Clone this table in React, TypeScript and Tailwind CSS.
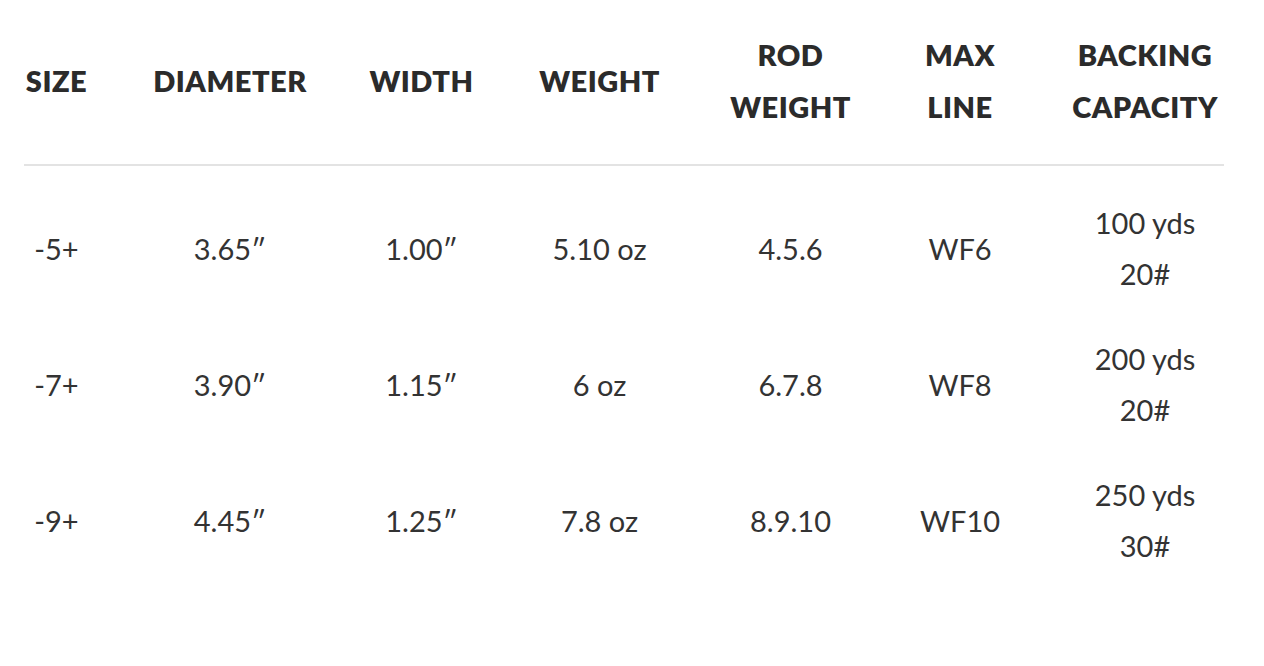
const heads = [["SIZE"], ["DIAMETER"], ["WIDTH"], ["WEIGHT"], ["ROD", "WEIGHT"], ["MAX", "LINE"], ["BACKING", "CAPACITY"]];

const rows = [
  ["-5+", "3.65″", "1.00″", "5.10 oz", "4.5.6", "WF6", ["100 yds", "20#"]],
  ["-7+", "3.90″", "1.15″", "6 oz", "6.7.8", "WF8", ["200 yds", "20#"]],
  ["-9+", "4.45″", "1.25″", "7.8 oz", "8.9.10", "WF10", ["250 yds", "30#"]],
];

const cols = "grid grid-cols-[65px_282px_101px_255px_127px_212px_158px]";

export default function App() {
  return (
    <div className="min-h-screen bg-white px-6 font-['Lato',sans-serif] text-[#333]">
      <div className="w-[1200px]">
        <div className={`${cols} h-[166px] items-center border-b-2 border-[#e3e3e3]`}>
          {heads.map((h, i) => (
            <div key={i} className="flex flex-col items-center text-center text-[29px] font-extrabold leading-[52px] tracking-[0.5px] text-[#2b2b2b] pb-[2px] whitespace-nowrap">
              {h.map((t) => (
                <span key={t}>{t}</span>
              ))}
            </div>
          ))}
        </div>
        <div className="pt-[14px]">
          {rows.map((r, i) => (
            <div key={i} className={`${cols} h-[136px] items-center`}>
              {r.map((c, j) => (
                <div key={j} className="flex flex-col items-center text-center text-[29px] leading-[51px] whitespace-nowrap">
                  {Array.isArray(c) ? c.map((t) => <span key={t}>{t}</span>) : <span>{c}</span>}
                </div>
              ))}
            </div>
          ))}
        </div>
      </div>
    </div>
  );
}
